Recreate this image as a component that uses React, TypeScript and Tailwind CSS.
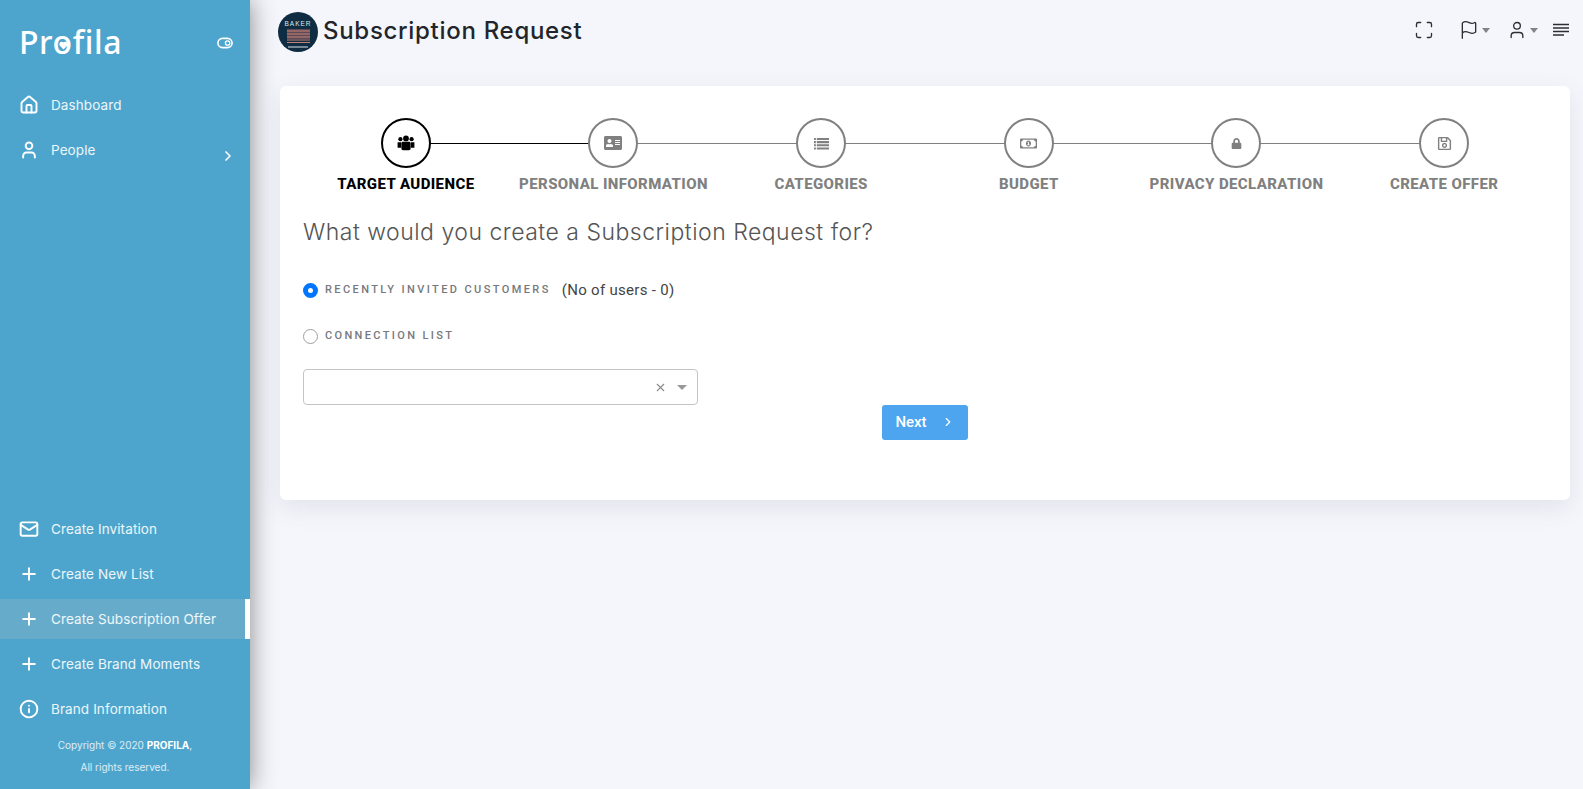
import React from 'react';
import { House, User, ChevronRight, Mail, Plus, Info, Flag, Maximize, X } from 'lucide-react';
import { FaAddressCard, FaRegMoneyBillAlt, FaLock, FaRegSave } from 'react-icons/fa';

const mainNav = [
  { label: 'Dashboard', icon: House },
  { label: 'People', icon: User, arrow: true },
];

const bottomNav = [
  { label: 'Create Invitation', icon: Mail },
  { label: 'Create New List', icon: Plus },
  { label: 'Create Subscription Offer', icon: Plus, active: true },
  { label: 'Create Brand Moments', icon: Plus },
  { label: 'Brand Information', icon: Info },
];

// three figures, the middle one in front
function UsersGlyph({ size }: any) {
  return (
    <svg width={size} height={size} viewBox="0 0 18 18" fill="currentColor" aria-hidden="true">
      <circle cx="3.4" cy="5.2" r="2.1" />
      <circle cx="14.6" cy="5.2" r="2.1" />
      <circle cx="9" cy="4.4" r="2.9" />
      <path d="M.6 8.2h3.6v5.6H.6zM13.8 8.2h3.6v5.6h-3.6z" />
      <path d="M4.4 9.4c0-1 .7-1.6 1.6-1.6h6c.9 0 1.6.6 1.6 1.6v5.2c0 .9-.7 1.6-1.6 1.6H6c-.9 0-1.6-.7-1.6-1.6z" />
    </svg>
  );
}

function ListGlyph({ size }: any) {
  return (
    <svg width={size} height={size} viewBox="0 0 16 16" fill="currentColor" aria-hidden="true">
      <path d="M0 2h2v2.2H0zM3 2h13v2.2H3zM0 5.4h2v2.2H0zM3 5.4h13v2.2H3zM0 8.8h2V11H0zM3 8.8h13V11H3zM0 12.2h2v2.2H0zM3 12.2h13v2.2H3z" />
    </svg>
  );
}

const steps = [
  { label: 'TARGET AUDIENCE', icon: UsersGlyph, size: 18 },
  { label: 'PERSONAL INFORMATION', icon: FaAddressCard, size: 18 },
  { label: 'CATEGORIES', icon: ListGlyph, size: 15 },
  { label: 'BUDGET', icon: FaRegMoneyBillAlt, size: 17 },
  { label: 'PRIVACY DECLARATION', icon: FaLock, size: 11 },
  { label: 'CREATE OFFER', icon: FaRegSave, size: 15 },
];

function NavItem({ item }: any) {
  const Icon = item.icon;
  return (
    <div className={`relative flex h-10 items-center pl-[19px] text-[13.5px] tracking-[0.1px] text-white/90 ${item.active ? 'bg-[#67abcb]' : ''}`}>
      <Icon className="h-5 w-5 text-white" strokeWidth={2.3} />
      <span className="ml-[12px]">{item.label}</span>
      {item.arrow && <ChevronRight className="absolute right-[14px] top-[18px] h-4 w-4 text-white" strokeWidth={2.5} />}
      {item.active && <span className="absolute inset-y-0 right-0 w-[5px] bg-white" />}
    </div>
  );
}

function Logo() {
  return (
    <div className="relative -mt-[2px] text-[32px] leading-none font-medium tracking-[0.6px] text-white [font-family:'Noto_Sans',sans-serif]">
      Profila
      <svg className="absolute left-[40px] top-[15px] h-[9px] w-[9px]" viewBox="0 0 10 10" aria-hidden="true">
        <path d="M5 9.5 1 5.2C-.4 3.4.8.8 3 .8c.9 0 1.6.4 2 1 .4-.6 1.1-1 2-1 2.2 0 3.4 2.6 2 4.4z" fill="#fff" />
      </svg>
    </div>
  );
}

function Avatar() {
  return (
    <svg className="h-10 w-10 shrink-0" viewBox="0 0 40 40" aria-hidden="true">
      <circle cx="20" cy="20" r="20" fill="#0f2c42" />
      <text x="20" y="14" textAnchor="middle" fontSize="6.5" fill="#dfe6ea" letterSpacing="1" fontFamily="Liberation Sans, sans-serif">BAKER</text>
      <rect x="9" y="17" width="23" height="10" fill="#5d4a57" />
      <path d="M9 19h23M9 22h23M9 25h23M9 28h23M9 30.5h23" stroke="#d98a7c" strokeWidth="0.9" />
      <path d="M10 35h20" stroke="#dfe6ea" strokeWidth="1" />
    </svg>
  );
}

export default function App() {
  return (
    <div className="flex h-[789px] w-[1583px] overflow-hidden bg-[#f5f6fb] [font-family:Inter,sans-serif]">
      <aside className="relative z-10 flex w-[250px] shrink-0 flex-col justify-between bg-[#4da5cd] shadow-[0_0_24px_rgba(0,0,0,0.45)]">
        <div>
          <div className="flex h-[85px] items-center justify-between pl-[19px] pr-[17px]">
            <Logo />
            <svg className="h-4 w-4" viewBox="0 0 16 16" aria-hidden="true">
              <rect x="0.9" y="3.4" width="14.2" height="9.2" rx="4.6" fill="none" stroke="#fff" strokeWidth="1.6" />
              <circle cx="10.6" cy="8" r="2.2" fill="none" stroke="#fff" strokeWidth="1.3" />
            </svg>
          </div>
          <nav className="flex flex-col gap-[5px]">
            {mainNav.map((item) => (
              <NavItem key={item.label} item={item} />
            ))}
          </nav>
        </div>
        <div>
          <nav className="flex flex-col gap-[5px]">
            {bottomNav.map((item) => (
              <NavItem key={item.label} item={item} />
            ))}
          </nav>
          <div className="mt-[5px] pb-[11px] text-center text-[10px] leading-[22px] text-white/80">
            <p>Copyright © 2020 <b className="text-white">PROFILA</b>,</p>
            <p>All rights reserved.</p>
          </div>
        </div>
      </aside>

      <main className="min-w-0 flex-1 pl-[30px] pr-[13px]">
        <header className="flex h-[86px] items-start justify-between pt-[12px]">
          <div className="-ml-[2px] flex items-center gap-[5px]">
            <Avatar />
            <h1 className="-mt-[3px] text-[24px] font-medium tracking-[0.7px] text-[#222529] [font-family:Inter,sans-serif]">Subscription Request</h1>
          </div>
          <div className="flex items-center pt-[8px] text-[#2b2f33]">
            <Maximize className="h-[20px] w-[20px]" strokeWidth={1.6} />
            <Flag className="ml-[25px] h-[20px] w-[20px]" strokeWidth={1.6} />
            <span className="ml-[3px] h-0 w-0 border-x-[4px] border-t-[5px] border-x-transparent border-t-[#808488]" />
            <User className="ml-[17px] h-[20px] w-[20px]" strokeWidth={1.6} />
            <span className="ml-[3px] h-0 w-0 border-x-[4px] border-t-[5px] border-x-transparent border-t-[#808488]" />
            <svg className="ml-[14px] h-[18px] w-[18px]" viewBox="0 0 18 18" aria-hidden="true">
              <path d="M1 3.5h16M1 7h16M1 10.5h16M1 14h11" stroke="#2b2f33" strokeWidth="1.4" />
            </svg>
          </div>
        </header>

        <section className="h-[414px] rounded-md bg-white px-[22px] pt-[32px] shadow-[0_8px_24px_rgba(90,100,130,0.12)]">
          <div className="grid grid-cols-6">
            {steps.map((step, i) => {
              const Icon = step.icon;
              const on = i === 0;
              return (
                <div key={step.label} className="relative flex flex-col items-center">
                  {i < steps.length - 1 && (
                    <span className={`absolute left-1/2 top-[25px] h-px w-full ${on ? 'bg-black' : 'bg-[#808080]'}`} />
                  )}
                  <div className={`relative flex h-[50px] w-[50px] items-center justify-center rounded-full border-2 bg-white ${on ? 'border-black text-black' : 'border-[#808080] text-[#808080]'}`}>
                    <Icon size={step.size} />
                  </div>
                  <span className={`mt-[5px] text-[15px] leading-[22px] font-extrabold tracking-[0.4px] whitespace-nowrap [font-family:Roboto,sans-serif] ${on ? 'text-black' : 'text-[#808080]'}`}>
                    {step.label}
                  </span>
                </div>
              );
            })}
          </div>

          <div className="pl-px">
            <h2 className="mt-[20px] text-[23px] leading-[34px] font-light tracking-[0.5px] text-[#555] [font-family:Inter,sans-serif]">
              What would you create a Subscription Request for?
            </h2>

            <div className="mt-[30px] flex h-[22px] items-center">
              <span className="h-[15px] w-[15px] rounded-full border-[5px] border-[#0075ff] bg-white" />
              <span className="ml-[7px] pt-px text-[11px] font-medium tracking-[2.4px] text-[#77797d] [font-family:Roboto,sans-serif]">RECENTLY INVITED CUSTOMERS</span>
              <span className="ml-[11px] text-[15px] tracking-[0.3px] text-[#444] [font-family:Roboto,sans-serif]">(No of users - 0)</span>
            </div>
            <div className="mt-[24px] flex h-[22px] items-center">
              <span className="h-[15px] w-[15px] rounded-full border border-[#a0a0a0] bg-white" />
              <span className="ml-[7px] text-[11px] font-medium tracking-[2.35px] text-[#77797d] [font-family:Roboto,sans-serif]">CONNECTION LIST</span>
            </div>

            <div className="mt-[22px] flex h-[36px] w-[395px] items-center justify-end rounded border border-[#c4c4c4] bg-white pr-[10px]">
              <X className="h-[13px] w-[13px] text-[#8a8a8a]" strokeWidth={2} />
              <span className="ml-[10px] h-0 w-0 border-x-[5px] border-t-[5px] border-x-transparent border-t-[#999]" />
            </div>
          </div>

          <div className="flex justify-center">
            <button className="flex h-[35px] w-[86px] items-center justify-center rounded-[3px] bg-[#4da5ef] text-[15px] font-medium text-white [font-family:Roboto,sans-serif]">
              Next
              <ChevronRight className="mb-[2px] ml-[14px] h-[14px] w-[14px]" strokeWidth={2} />
            </button>
          </div>
        </section>
      </main>
    </div>
  );
}
